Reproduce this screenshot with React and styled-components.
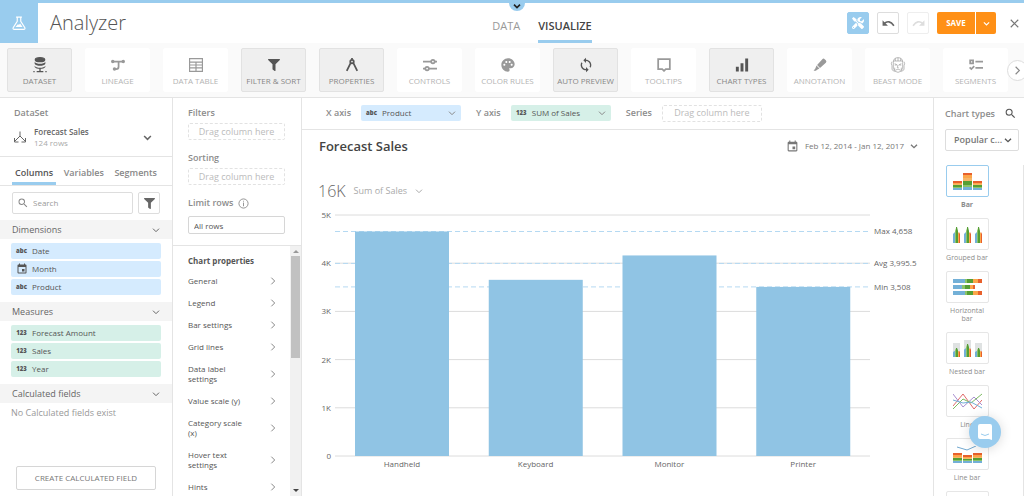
import React from 'react'
import styled, { createGlobalStyle, css } from 'styled-components'
import { FaFilter, FaTools } from 'react-icons/fa'
import { MdEvent, MdPalette, MdSearch, MdSync } from 'react-icons/md'

const colors = {
  blue: '#99ccee',
  bar: '#90c4e4',
  chipBlue: '#d5ebfe',
  chipGreen: '#d6f0e8',
  orange: '#ff9016',
  line: '#e4e4e4',
  text: '#555',
  dim: '#8c8c8c',
  faint: '#b4b4b4'
}

const GlobalStyle = createGlobalStyle`
  * {
    box-sizing: border-box;
  }

  body {
    margin: 0;
    background: #fff;
    color: ${colors.text};
    font-family: 'Open Sans', 'Liberation Sans', sans-serif;
    font-size: 9px;
    line-height: 12px;
  }

  button, input, select {
    margin: 0;
    padding: 0;
    border: 0;
    background: none;
    color: inherit;
    font: inherit;
  }

  ul {
    margin: 0;
    padding: 0;
    list-style: none;
  }

  h1, h2, h3 {
    margin: 0;
    font: inherit;
  }

  svg {
    display: block;
    flex-shrink: 0;
  }
`

/* Icons */

const Icon = ({ size = 14, box = 24, stroke = 2, children }) => (
  <svg
    width={size}
    height={size}
    viewBox={`0 0 ${box} ${box}`}
    fill="none"
    stroke="currentColor"
    strokeWidth={stroke}
    aria-hidden="true"
  >
    {children}
  </svg>
)

const ChevronDown = ({ size = 8, stroke = 4 }) => (
  <Icon size={size} stroke={stroke}><path d="M3 8l9 9 9-9" /></Icon>
)

const ChevronRight = ({ size = 8, stroke = 3 }) => (
  <Icon size={size} stroke={stroke}><path d="M7 2l10 10L7 22" /></Icon>
)

const FlaskIcon = () => (
  <Icon size={14} stroke={2}>
    <path d="M7 2h10M9 2v7L2 20q-1 3 2 3h16q3 0 2-3L15 9V2" />
    <path d="M6 19l4-5 2 1 2-2 4 6z" fill="currentColor" stroke="none" />
  </Icon>
)

const DatasetIcon = () => (
  <Icon size={16} stroke={2}>
    <ellipse cx="12" cy="4" rx="7" ry="3" fill="currentColor" />
    <path d="M4 7c2 4 14 4 16 0v3c-2 4-14 4-16 0zM4 13c2 4 14 4 16 0v2c-2 4-14 4-16 0z" fill="currentColor" stroke="none" />
    <path d="M12 18v4M2 22h2M7 22h10M20 22h2" />
  </Icon>
)

const LineageIcon = () => (
  <Icon stroke={3}>
    <circle cx="3" cy="6" r="3" fill="currentColor" stroke="none" />
    <circle cx="21" cy="6" r="3" fill="currentColor" stroke="none" />
    <circle cx="6" cy="19" r="3" fill="currentColor" stroke="none" />
    <path d="M3 6h18M6 19h3q4 0 4-4V6" />
  </Icon>
)

const TableIcon = () => (
  <Icon stroke={2}>
    <path d="M1 1h22v22H1zM1 7h22M1 12h22M1 17h22M12 7v16" />
  </Icon>
)

const CompassIcon = () => (
  <Icon stroke={3}>
    <circle cx="12" cy="6" r="3" />
    <path d="M12 0v3M10 8L3 22M14 8l7 14" />
  </Icon>
)

const ControlsIcon = () => (
  <Icon stroke={3}>
    <path d="M0 6h14M20 6h4M0 18h4M10 18h14" />
    <circle cx="17" cy="6" r="3" />
    <circle cx="7" cy="18" r="3" />
  </Icon>
)

const TooltipIcon = () => (
  <Icon stroke={3}><path d="M2 2h20v17h-7l-3 3-3-3H2z" /></Icon>
)

const BarsIcon = () => (
  <Icon stroke={5}><path d="M4 23v-8M12 23V9M20 23V1" /></Icon>
)

const MarkerIcon = () => (
  <Icon stroke={0}>
    <path d="M16 2q2-2 4 0l2 2q2 2 0 4L12 17 7 12zM6 13l5 5-4 2-2 2H1l3-4z" fill="currentColor" />
  </Icon>
)

const BeastIcon = () => (
  <Icon size={16} stroke={1}>
    <path d="M5 8q0-7 7-7t7 7v9q-2 6-7 6t-7-6zM5 6h14M8 2v4M12 1v5M16 2v4" />
    <path d="M3 7q-2 3 0 6v6l4 3M21 7q2 3 0 6v6l-4 3M7 10l4 2M17 10l-4 2M7 12h3M14 12h3M12 12l-1 4h2M8 20q4-4 8 0M7 16v4M17 16v4" />
  </Icon>
)

const SegmentsIcon = () => (
  <Icon stroke={3}>
    <path d="M2 4h5v5H2zM11 6h13M11 17h13M1 16l3 3 5-5" />
  </Icon>
)

const UndoIcon = ({ flip }) => (
  <Icon size={13} stroke={3}>
    <g transform={flip ? 'translate(24 0) scale(-1 1)' : undefined}>
      <path d="M4 12q9-8 18 4" />
      <path d="M1 6v10h10z" fill="currentColor" stroke="none" />
    </g>
  </Icon>
)

const CloseIcon = () => (
  <Icon size={9} stroke={3}><path d="M2 2l20 20M22 2L2 22" /></Icon>
)

const ForkIcon = () => (
  <Icon size={12} stroke={2}>
    <path d="M12 1v9L2 20M12 10l10 10M1 14v8h8M15 22h8v-8" />
  </Icon>
)

const InfoIcon = () => (
  <Icon size={11} stroke={2}>
    <circle cx="12" cy="12" r="10" />
    <path d="M12 10v8M12 6v2" />
  </Icon>
)

/* Header */

const Page = styled.div`
  display: flex;
  flex-direction: column;
  height: 100vh;
  overflow: hidden;
`

const Header = styled.header`
  display: grid;
  grid-template-columns: 38px 1fr auto 1fr;
  flex-shrink: 0;
  height: 43px;
  border-top: 3px solid ${colors.blue};
  position: relative;
`

const Logo = styled.div`
  display: flex;
  align-items: center;
  justify-content: center;
  background: ${colors.blue};
  color: #fff;
`

const AppName = styled.h1`
  padding-left: 12px;
  font-size: 20px;
  font-weight: 300;
  line-height: 40px;
`

const Pull = styled.button`
  position: absolute;
  top: -3px;
  left: 509px;
  display: flex;
  justify-content: center;
  width: 16px;
  height: 11px;
  padding-top: 2px;
  border-radius: 0 0 8px 8px;
  background: ${colors.blue};
  color: #222;
`

const Modes = styled.nav`
  display: flex;
  gap: 18px;
  padding-left: 22px;
`

const Mode = styled.button`
  padding-top: 9px;
  border-bottom: 3px solid ${props => (props.$active ? colors.blue : 'transparent')};
  color: ${props => (props.$active ? '#444' : '#999')};
  font-size: 11px;
  font-weight: ${props => (props.$active ? 600 : 400)};
`

const Actions = styled.div`
  display: flex;
  align-items: center;
  justify-content: flex-end;
  gap: 8px;
`

const IconButton = styled.button`
  display: flex;
  align-items: center;
  justify-content: center;
  width: 22px;
  height: 22px;
  border: 1px solid ${props => (props.$filled ? colors.blue : '#ddd')};
  border-radius: 2px;
  background: ${props => (props.$filled ? colors.blue : '#fff')};
  color: ${props => (props.$filled ? '#fff' : '#666')};

  &:disabled {
    border-color: #eee;
    color: #ddd;
  }
`

const SaveGroup = styled.div`
  display: flex;
  gap: 1px;
`

const SaveButton = styled.button`
  display: flex;
  align-items: center;
  justify-content: center;
  width: ${props => (props.$menu ? 20 : 38)}px;
  height: 22px;
  border-radius: ${props => (props.$menu ? '0 2px 2px 0' : '2px 0 0 2px')};
  background: ${colors.orange};
  color: #fff;
  font-size: 8px;
  font-weight: 700;
`

const Close = styled.button`
  padding: 6px 5px 6px 6px;
  color: #777;
`

/* Toolbar */

const Toolbar = styled.div`
  position: relative;
  flex-shrink: 0;
  height: 55px;
  padding: 5px 7px;
  border-bottom: 1px solid ${colors.line};
  background: #fafafa;
  overflow: hidden;
`

const Tools = styled.div`
  display: flex;
  gap: 13px;
`

const Tool = styled.button`
  display: flex;
  flex-direction: column;
  align-items: center;
  justify-content: space-between;
  flex-shrink: 0;
  width: 65px;
  height: 44px;
  padding: 8px 0 4px;
  border: 1px solid #fff;
  border-radius: 2px;
  background: #fff;
  color: ${colors.faint};
  font-size: 8px;
  white-space: nowrap;

  svg {
    color: #999;
  }

  ${props => props.$active && css`
    border-color: #e2e2e2;
    background: #efefef;
    color: #888;

    svg {
      color: #555;
    }
  `}
`

const ToolIcon = styled.span`
  display: flex;
  align-items: center;
  height: 16px;
`

const NextTools = styled.button`
  position: absolute;
  top: 17px;
  right: -4px;
  display: flex;
  align-items: center;
  justify-content: center;
  width: 21px;
  height: 21px;
  border: 1px solid #ddd;
  border-radius: 50%;
  background: #fff;
  color: #888;
`

const Workspace = styled.div`
  display: flex;
  flex: 1;
  min-height: 0;
`

/* DataSet panel */

const DataPanel = styled.aside`
  display: flex;
  flex-direction: column;
  flex-shrink: 0;
  width: 173px;
  border-right: 1px solid ${colors.line};
`

const Caption = styled.h2`
  color: ${colors.dim};
  font-weight: 600;
`

const DataSource = styled.div`
  padding: 9px 14px;
  height: 58px;
`

const SourceButton = styled.button`
  display: flex;
  align-items: center;
  gap: 8px;
  width: 100%;
  margin-top: 7px;
  padding-right: 6px;
  color: #666;
  text-align: left;
`

const SourceName = styled.span`
  flex: 1;
  font-size: 8px;
  font-weight: 600;
  line-height: 11px;
`

const SourceRows = styled.span`
  display: block;
  color: #aaa;
  font-weight: 400;
`

const Tabs = styled.div`
  display: flex;
  justify-content: space-between;
  height: 30px;
  padding: 0 12px;
  border-top: 1px solid ${colors.line};
  border-bottom: 1px solid ${colors.line};
`

const Tab = styled.button`
  padding: 6px 3px 0;
  border-bottom: 3px solid ${props => (props.$active ? colors.blue : 'transparent')};
  color: ${props => (props.$active ? '#555' : '#888')};
  font-weight: 600;
`

const SearchRow = styled.div`
  display: flex;
  gap: 5px;
  padding: 6px 12px;
`

const SearchBox = styled.label`
  display: flex;
  align-items: center;
  flex: 1;
  gap: 4px;
  min-width: 0;
  height: 22px;
  padding: 0 4px;
  border: 1px solid #ddd;
  border-radius: 2px;
  color: #888;

  input {
    width: 100%;
    min-width: 0;
    font-size: 8px;
    outline: none;
  }

  input::placeholder {
    color: #999;
    opacity: 1;
  }
`

const SectionHead = styled.button`
  display: flex;
  align-items: center;
  justify-content: space-between;
  width: 100%;
  height: 19px;
  padding: 0 12px;
  background: #f4f4f4;
  color: #666;
`

const FieldList = styled.ul`
  display: flex;
  flex-direction: column;
  gap: 2px;
  padding: 4px 11px 7px;
`

const chip = css`
  display: flex;
  align-items: center;
  gap: 5px;
  height: 16px;
  padding: 0 5px;
  border-radius: 2px;
  background: ${props => (props.$measure ? colors.chipGreen : colors.chipBlue)};
  font-size: 8px;
`

const Field = styled.li`
  ${chip}
`

const TypeMark = styled.span`
  display: flex;
  justify-content: center;
  width: 11px;
  font-size: 6px;
  font-weight: 800;
`

const EmptyNote = styled.p`
  margin: 0;
  padding: 4px 11px;
  color: #999;
`

const CreateButton = styled.button`
  height: 24px;
  margin: auto 16px 6px;
  border: 1px solid #d6d6d6;
  border-radius: 2px;
  color: #777;
  font-size: 8px;
`

/* Filters and properties */

const SettingsPanel = styled.aside`
  display: flex;
  flex-direction: column;
  flex-shrink: 0;
  width: 129px;
  border-right: 1px solid ${colors.line};
`

const Filters = styled.div`
  height: 148px;
  padding: 9px 16px 0 15px;
  border-bottom: 1px solid ${colors.line};
`

const DropZone = styled.div`
  display: flex;
  align-items: center;
  justify-content: center;
  height: 17px;
  margin: 4px 0 12px;
  border: 1px dashed #e2e2e2;
  border-radius: 2px;
  color: #bbb;
`

const LimitLabel = styled.label`
  display: flex;
  align-items: center;
  gap: 4px;
  color: ${colors.dim};
  font-weight: 600;
`

const LimitInput = styled.input`
  display: block;
  width: 100%;
  height: 18px;
  margin-top: 7px;
  padding: 0 5px;
  border: 1px solid #d6d6d6;
  border-radius: 2px;
  font-size: 8px;
`

const Properties = styled.div`
  display: flex;
  flex: 1;
  min-height: 0;
`

const PropertyScroll = styled.div`
  flex: 1;
  padding: 9px 13px 0 15px;
  overflow: hidden;
`

const PropertyTitle = styled.h2`
  margin-bottom: 3px;
  font-size: 8px;
  font-weight: 700;
`

const Property = styled.button`
  display: flex;
  align-items: center;
  justify-content: space-between;
  width: 100%;
  padding: 6px 0;
  font-size: 8px;
  line-height: 10px;
  text-align: left;

  span {
    max-width: 62px;
  }

  svg {
    color: #888;
  }
`

const ScrollTrack = styled.div`
  display: flex;
  flex-direction: column;
  align-items: center;
  width: 11px;
  padding: 4px 1px;
  background: #f1f1f1;
`

const ScrollThumb = styled.div`
  width: 9px;
  height: 102px;
  margin: 3px 0 auto;
  background: #c1c1c1;
`

const ScrollArrow = styled.div`
  border: 3px solid transparent;
  border-top-width: ${props => (props.$down ? 3 : 0)}px;
  border-bottom-width: ${props => (props.$down ? 0 : 3)}px;
  border-top-color: #444;
  border-bottom-color: #999;
`

/* Chart area */

const Main = styled.main`
  flex: 1;
  min-width: 0;
`

const Shelf = styled.div`
  display: flex;
  align-items: center;
  gap: 15px;
  height: 32px;
  padding: 0 24px 1px;
  border-bottom: 1px solid ${colors.line};
`

const ShelfItem = styled.div`
  display: flex;
  align-items: center;
  gap: 10px;
  color: ${colors.dim};
  font-weight: 600;

  ${DropZone} {
    width: 100px;
    margin: 0;
    font-weight: 400;
  }
`

const ShelfChip = styled.button`
  ${chip}
  width: 100px;
  color: #555;
  font-weight: 400;

  > svg {
    margin-left: auto;
    color: #888;
  }
`

const ChartHead = styled.div`
  display: flex;
  align-items: center;
  justify-content: space-between;
  height: 32px;
  padding: 0 15px 0 17px;
`

const ChartTitle = styled.h2`
  color: #444;
  font-size: 13px;
  font-weight: 600;
`

const DateRange = styled.button`
  display: flex;
  align-items: center;
  gap: 6px;
  color: #777;
  font-size: 8px;
`

const Summary = styled.button`
  display: flex;
  align-items: center;
  gap: 8px;
  height: 28px;
  margin: 15px 16px 0;
  color: #aaa;
`

const Total = styled.span`
  color: #666;
  font-size: 16px;
  font-weight: 300;
`

const Plot = styled.svg`
  width: 100%;
  height: auto;

  text {
    fill: #666;
    font-size: 8px;
  }
`

/* Chart types */

const TypesPanel = styled.aside`
  flex-shrink: 0;
  width: 91px;
  border-left: 1px solid ${colors.line};
`

const TypesHead = styled.div`
  display: flex;
  align-items: center;
  justify-content: space-between;
  padding: 9px 7px 0 11px;
`

const SelectBox = styled.div`
  position: relative;
  margin: 9px 5px 14px 11px;

  select {
    display: block;
    width: 100%;
    height: 22px;
    padding-left: 8px;
    border: 1px solid #ddd;
    border-radius: 2px;
    color: #777;
    font-weight: 600;
    appearance: none;
  }

  svg {
    position: absolute;
    top: 7px;
    right: 7px;
    pointer-events: none;
  }
`

const TypeList = styled.div`
  display: flex;
  flex-direction: column;
  align-items: flex-start;
  gap: 9px;
  min-height: 100%;
  padding-left: 11px;
  border-right: 1px solid ${colors.line};
`

const TypeButton = styled.button`
  display: flex;
  flex-direction: column;
  align-items: center;
  gap: 4px;
  width: 44px;
  color: ${colors.dim};
  font-size: 7px;
  font-weight: ${props => (props.$active ? 700 : 400)};
  line-height: 8px;
`

const Tile = styled.span`
  display: flex;
  align-items: center;
  justify-content: center;
  width: 43px;
  height: 32px;
  border: 1px solid ${props => (props.$active ? colors.blue : '#e6e6e6')};
  border-radius: 2px;
`

const ChatButton = styled.button`
  position: absolute;
  right: 23px;
  bottom: 48px;
  display: flex;
  align-items: center;
  justify-content: center;
  width: 32px;
  height: 32px;
  border-radius: 50%;
  background: ${colors.blue};
  box-shadow: 0 1px 12px rgba(0, 0, 0, 0.15);
`

const tools = [
  { label: 'DATASET', icon: <DatasetIcon />, active: true },
  { label: 'LINEAGE', icon: <LineageIcon /> },
  { label: 'DATA TABLE', icon: <TableIcon /> },
  { label: 'FILTER & SORT', icon: <FaFilter size={12} />, active: true },
  { label: 'PROPERTIES', icon: <CompassIcon />, active: true },
  { label: 'CONTROLS', icon: <ControlsIcon /> },
  { label: 'COLOR RULES', icon: <MdPalette size={16} /> },
  { label: 'AUTO PREVIEW', icon: <MdSync size={16} />, active: true },
  { label: 'TOOLTIPS', icon: <TooltipIcon /> },
  { label: 'CHART TYPES', icon: <BarsIcon />, active: true },
  { label: 'ANNOTATION', icon: <MarkerIcon /> },
  { label: 'BEAST MODE', icon: <BeastIcon /> },
  { label: 'SEGMENTS', icon: <SegmentsIcon /> }
]

const dimensions = [
  { name: 'Date', mark: 'abc' },
  { name: 'Month', mark: <MdEvent size={12} /> },
  { name: 'Product', mark: 'abc' }
]

const measures = ['Forecast Amount', 'Sales', 'Year']

const properties = [
  'General',
  'Legend',
  'Bar settings',
  'Grid lines',
  'Data label settings',
  'Value scale (y)',
  'Category scale (x)',
  'Hover text settings',
  'Hints'
]

const sales = [
  { name: 'Handheld', value: 4658 },
  { name: 'Keyboard', value: 3655 },
  { name: 'Monitor', value: 4161 },
  { name: 'Printer', value: 3508 }
]

const references = [
  { label: 'Max 4,658', value: 4658 },
  { label: 'Avg 3,995.5', value: 3995.5 },
  { label: 'Min 3,508', value: 3508 }
]

const chart = { left: 33, right: 568, top: 10, bottom: 251 }
const toY = value => chart.bottom - (value / 5000) * (chart.bottom - chart.top)
const slot = (chart.right - chart.left) / sales.length

const SalesChart = () => (
  <Plot viewBox="0 0 631 272" role="img" aria-label="Sum of sales by product">
    {[0, 1, 2, 3, 4, 5].map(tick => (
      <g key={tick}>
        <line x1={chart.left} x2={chart.right} y1={toY(tick * 1000)} y2={toY(tick * 1000)} stroke="#dcdcdc" />
        <text x="29" y={toY(tick * 1000) + 3} textAnchor="end">{tick ? `${tick}K` : '0'}</text>
      </g>
    ))}
    {references.map(({ label, value }) => (
      <g key={label}>
        <line
          x1={chart.left}
          x2={chart.right}
          y1={toY(value)}
          y2={toY(value)}
          stroke="#b5d9f2"
          strokeDasharray="5 3"
        />
        <text x="572" y={toY(value) + 3}>{label}</text>
      </g>
    ))}
    {sales.map(({ name, value }, i) => (
      <g key={name}>
        <rect
          x={chart.left + slot * i + 20}
          y={toY(value)}
          width="94"
          height={chart.bottom - toY(value)}
          fill={colors.bar}
        />
        <text x={chart.left + slot * (i + 0.5)} y="262" textAnchor="middle">{name}</text>
      </g>
    ))}
  </Plot>
)

/* Thumbnails of the chart types */

const rainbow = ['#e8602c', '#fba64a', '#f7b668', '#559e34', '#8bc469', '#73b0d7']

const Stack = ({ x, heights }) => {
  let y = 17
  return [...heights].reverse().map((h, i) => {
    y -= h
    return <rect key={i} x={x} y={y} width="9" height={h} fill={rainbow[5 - i]} />
  })
}

const BarThumb = () => (
  <svg width="29" height="17">
    <Stack x={0} heights={[2, 1, 1, 2, 1, 2]} />
    <Stack x={10} heights={[2, 3, 3, 4, 2, 3]} />
    <Stack x={20} heights={[2, 1, 1, 2, 1, 2]} />
  </svg>
)

const spire = (
  <>
    <path d="M0 17V8l2-2v11z" fill="#73b0d7" />
    <path d="M2 17V5l1-3v15z" fill="#8bc469" />
    <path d="M3 17V1h1l1 4v12z" fill="#559e34" />
    <path d="M5 17V6l1 1v10z" fill="#fba64a" />
    <path d="M6 17V6l1 2v9z" fill="#e8602c" />
  </>
)

const GroupThumb = () => (
  <svg width="29" height="17">
    {[0, 11, 22].map(x => <g key={x} transform={`translate(${x} 0)`}>{spire}</g>)}
  </svg>
)

const NestedThumb = () => (
  <svg width="29" height="17">
    {[[0, 3, 9], [11, 0, 13], [22, 3, 9]].map(([x, top, height]) => (
      <g key={x}>
        <rect x={x} y={top} width="7" height={17 - top} fill="#dfe2e2" />
        <svg x={x} y={17 - height} width="7" height={height} viewBox="0 1 7 16" preserveAspectRatio="none">
          {spire}
        </svg>
      </g>
    ))}
  </svg>
)

const HorizontalThumb = () => (
  <svg width="29" height="17">
    {[[0, 12, 14, 20, 25, 29], [0, 9, 12, 17, 20, 22], [0, 12, 14, 20, 25, 29]].map((stops, row) => (
      stops.slice(1).map((end, i) => (
        <rect
          key={`${row}-${i}`}
          x={stops[i]}
          y={row * 6}
          width={end - stops[i]}
          height="4"
          fill={['#73b0d7', '#8bc469', '#559e34', '#fba64a', '#e8602c'][i]}
        />
      ))
    ))}
  </svg>
)

const LineThumb = () => (
  <svg width="29" height="17" fill="none">
    <path d="M0 13L10 1l11 15 8-9" stroke="#e06a6a" />
    <path d="M0 1l10 13L21 4l8 8" stroke="#a88fd0" />
    <path d="M0 16L10 6l8 4L29 1" stroke="#7dbb62" />
    <path d="M0 7l10 3 8-1 11 6" stroke="#73b0d7" />
  </svg>
)

const LineBarThumb = () => (
  <svg width="29" height="17">
    <path d="M4 1l10 3 9-4" fill="none" stroke="#73a9d0" />
    <Stack x={0} heights={[2, 2, 1, 2, 1, 2]} />
    <Stack x={10} heights={[2, 1, 1, 1, 1, 2]} />
    <Stack x={20} heights={[2, 2, 1, 2, 1, 2]} />
  </svg>
)

const chartTypes = [
  { name: 'Bar', thumb: <BarThumb />, active: true },
  { name: 'Grouped bar', thumb: <GroupThumb /> },
  { name: 'Horizontal bar', thumb: <HorizontalThumb /> },
  { name: 'Nested bar', thumb: <NestedThumb /> },
  { name: 'Line', thumb: <LineThumb /> },
  { name: 'Line bar', thumb: <LineBarThumb /> },
  { name: '', thumb: null }
]

const Section = ({ title, children }) => (
  <section>
    <SectionHead>{title}<ChevronDown stroke={3} /></SectionHead>
    {children}
  </section>
)

const App = () => (
  <Page>
    <GlobalStyle />
    <Header>
      <Logo><FlaskIcon /></Logo>
      <AppName>Analyzer</AppName>
      <Modes>
        <Mode>DATA</Mode>
        <Mode $active>VISUALIZE</Mode>
      </Modes>
      <Actions>
        <IconButton $filled aria-label="Tools"><FaTools size={12} /></IconButton>
        <IconButton aria-label="Undo"><UndoIcon /></IconButton>
        <IconButton aria-label="Redo" disabled><UndoIcon flip /></IconButton>
        <SaveGroup>
          <SaveButton>SAVE</SaveButton>
          <SaveButton $menu aria-label="Save options"><ChevronDown size={7} /></SaveButton>
        </SaveGroup>
        <Close aria-label="Close"><CloseIcon /></Close>
      </Actions>
      <Pull aria-label="Show menu"><ChevronDown size={8} stroke={5} /></Pull>
    </Header>

    <Toolbar>
      <Tools>
        {tools.map(({ label, icon, active }) => (
          <Tool key={label} $active={active}>
            <ToolIcon>{icon}</ToolIcon>
            {label}
          </Tool>
        ))}
      </Tools>
      <NextTools aria-label="More tools"><ChevronRight size={9} /></NextTools>
    </Toolbar>

    <Workspace>
      <DataPanel>
        <DataSource>
          <Caption>DataSet</Caption>
          <SourceButton>
            <ForkIcon />
            <SourceName>
              Forecast Sales
              <SourceRows>124 rows</SourceRows>
            </SourceName>
            <ChevronDown size={9} stroke={4} />
          </SourceButton>
        </DataSource>
        <Tabs>
          <Tab $active>Columns</Tab>
          <Tab>Variables</Tab>
          <Tab>Segments</Tab>
        </Tabs>
        <SearchRow>
          <SearchBox>
            <MdSearch size={12} />
            <input type="text" placeholder="Search" aria-label="Search" />
          </SearchBox>
          <IconButton aria-label="Filter columns"><FaFilter size={11} /></IconButton>
        </SearchRow>
        <Section title="Dimensions">
          <FieldList>
            {dimensions.map(({ name, mark }) => (
              <Field key={name}><TypeMark>{mark}</TypeMark>{name}</Field>
            ))}
          </FieldList>
        </Section>
        <Section title="Measures">
          <FieldList>
            {measures.map(name => (
              <Field key={name} $measure><TypeMark>123</TypeMark>{name}</Field>
            ))}
          </FieldList>
        </Section>
        <Section title="Calculated fields">
          <EmptyNote>No Calculated fields exist</EmptyNote>
        </Section>
        <CreateButton>CREATE CALCULATED FIELD</CreateButton>
      </DataPanel>

      <SettingsPanel>
        <Filters>
          <Caption>Filters</Caption>
          <DropZone>Drag column here</DropZone>
          <Caption>Sorting</Caption>
          <DropZone>Drag column here</DropZone>
          <LimitLabel htmlFor="limit">Limit rows <InfoIcon /></LimitLabel>
          <LimitInput id="limit" type="text" defaultValue="All rows" />
        </Filters>
        <Properties>
          <PropertyScroll>
            <PropertyTitle>Chart properties</PropertyTitle>
            {properties.map(name => (
              <Property key={name}><span>{name}</span><ChevronRight /></Property>
            ))}
          </PropertyScroll>
          <ScrollTrack>
            <ScrollArrow />
            <ScrollThumb />
            <ScrollArrow $down />
          </ScrollTrack>
        </Properties>
      </SettingsPanel>

      <Main>
        <Shelf>
          <ShelfItem>
            X axis
            <ShelfChip><TypeMark>abc</TypeMark>Product<ChevronDown stroke={3} /></ShelfChip>
          </ShelfItem>
          <ShelfItem>
            Y axis
            <ShelfChip $measure><TypeMark>123</TypeMark>SUM of Sales<ChevronDown stroke={3} /></ShelfChip>
          </ShelfItem>
          <ShelfItem>
            Series
            <DropZone>Drag column here</DropZone>
          </ShelfItem>
        </Shelf>
        <ChartHead>
          <ChartTitle>Forecast Sales</ChartTitle>
          <DateRange>
            <MdEvent size={13} />
            Feb 12, 2014 - Jan 12, 2017
            <ChevronDown size={8} />
          </DateRange>
        </ChartHead>
        <Summary>
          <Total>16K</Total>
          Sum of Sales
          <ChevronDown size={8} stroke={3} />
        </Summary>
        <SalesChart />
      </Main>

      <TypesPanel>
        <TypesHead>
          <Caption>Chart types</Caption>
          <MdSearch size={13} />
        </TypesHead>
        <SelectBox>
          <select aria-label="Chart type group">
            <option>Popular c...</option>
          </select>
          <ChevronDown size={8} />
        </SelectBox>
        <TypeList>
          {chartTypes.map(({ name, thumb, active }) => (
            <TypeButton key={name} $active={active} aria-label={name || 'More charts'}>
              <Tile $active={active}>{thumb}</Tile>
              {name}
            </TypeButton>
          ))}
        </TypeList>
      </TypesPanel>
    </Workspace>

    <ChatButton aria-label="Open chat">
      <svg width="16" height="16" viewBox="0 0 16 16" fill="none">
        <path d="M3 0h10q2 0 2 2v14l-3-1H3q-2 0-2-2V2q0-2 2-2z" fill="#fff" />
        <path d="M4 10q4 3 8 0" stroke={colors.blue} />
      </svg>
    </ChatButton>
  </Page>
)

export default App
